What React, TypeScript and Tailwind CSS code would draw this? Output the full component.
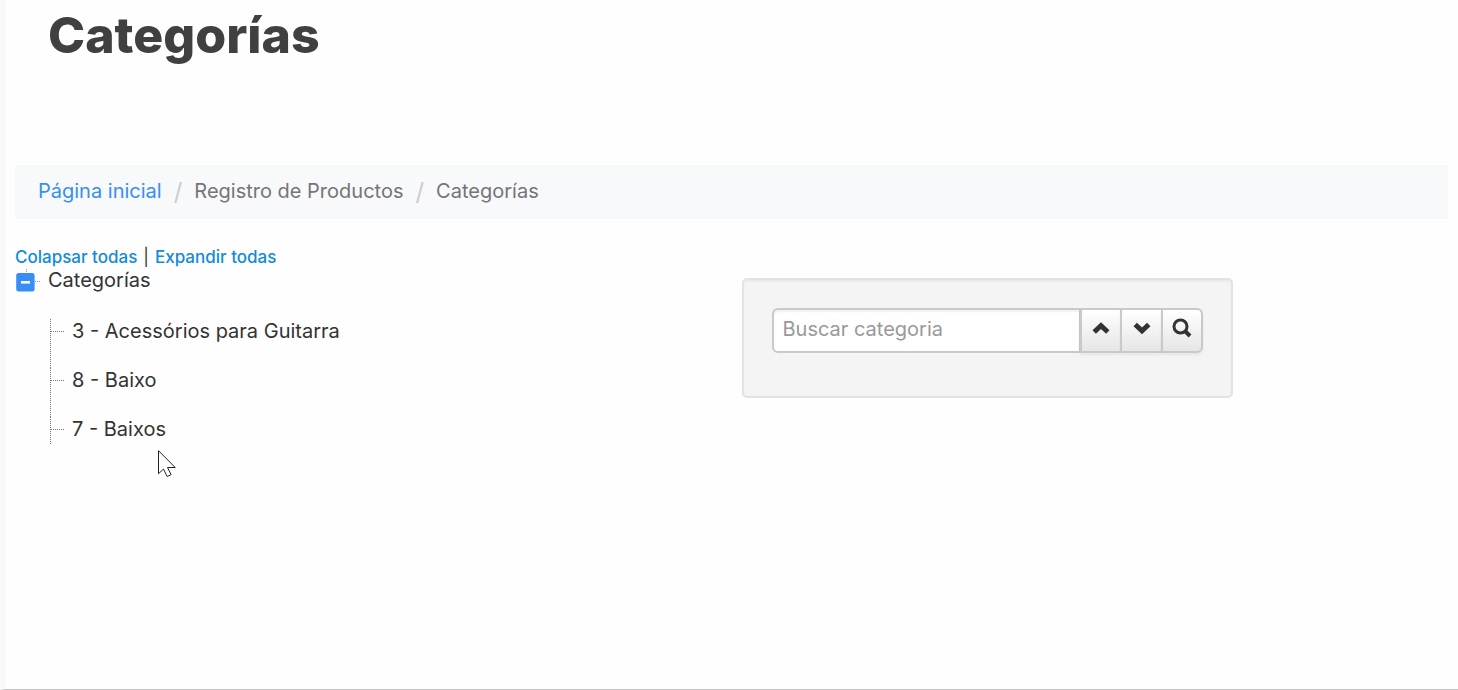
import { useState } from "react";

const categories = ["3 - Acessórios para Guitarra", "8 - Baixo", "7 - Baixos"];

const iconButton =
  "flex h-[45px] shrink-0 items-center justify-center border-y-2 border-l-2 border-[#c9c9c9] bg-linear-to-b from-white to-[#e6e6e6] pb-1.5 text-[#333333] shadow-[0_2px_3px_rgba(0,0,0,0.06)]";

function Separator() {
  return (
    <li aria-hidden="true" className="text-[24px] text-[#cccccc]">/</li>
  );
}

function Breadcrumb() {
  return (
    <nav aria-label="Breadcrumb" className="mt-[94px] bg-[#f8f9fb] px-[23px] pt-[14px] pb-[15px]">
      <ol className="flex items-center gap-3 text-[20px] leading-[25px] text-[#757575]">
        <li>
          <a href="#inicio" className="text-[#378ef7]">Página inicial</a>
        </li>
        <Separator />
        <li>Registro de Productos</li>
        <Separator />
        <li aria-current="page">Categorías</li>
      </ol>
    </nav>
  );
}

function CategoryTree() {
  const [open, setOpen] = useState(true);
  return (
    <div className="text-[#333333]">
      <div className="flex gap-[6px] text-[17px] leading-[24px]">
        <button type="button" onClick={() => setOpen(false)} className="font-medium text-[#138bd8]">Colapsar todas</button>
        <span>|</span>
        <button type="button" onClick={() => setOpen(true)} className="font-medium text-[#138bd8]">Expandir todas</button>
      </div>
      <div className="flex text-[20px] leading-[22px]">
        <button type="button" aria-label="Categorías" aria-expanded={open} onClick={() => setOpen(!open)} className="mr-2 h-6 w-[25px]">
          <svg width="25" height="24" viewBox="0 0 25 24">
            <path d="M11.5 0v4M20 12.5h5" stroke="#999" strokeDasharray="1 1" fill="none" />
            <rect x="1.2" y="4" width="18.4" height="18.5" rx="2.5" fill="#378ef7" />
            <rect x="6" y="12" width="9" height="2.6" fill="#fff" />
          </svg>
        </button>
        <span>Categorías</span>
      </div>
      {open && (
        <ul className="mt-[26px] ml-[35px] text-[20px] leading-[24px]">
          {categories.map((name) => (
            <li key={name} className="flex h-[49px] border-l border-dotted border-[#777777] last:h-[27px]">
              <span className="mt-3 mr-2 w-[13px] border-t border-dotted border-[#777777]" />
              {name}
            </li>
          ))}
        </ul>
      )}
    </div>
  );
}

function SearchPanel() {
  return (
    <form className="mt-[33px] h-[120px] rounded-[5px] border-2 border-[#e3e3e3] bg-[#f4f4f4] p-7 shadow-[inset_0_2px_2px_rgba(0,0,0,0.04)]">
      <div className="flex">
        <input
          type="text"
          aria-label="Buscar categoria"
          placeholder="Buscar categoria"
          className="h-[45px] min-w-0 flex-1 rounded-l-[6px] border-2 border-r border-[#c9c9c9] bg-white px-[9px] pb-1 text-[20px] text-[#555555] shadow-[inset_0_2px_2px_rgba(0,0,0,0.06)] outline-none placeholder:text-[#999999]"
        />
        <button type="button" aria-label="Anterior" className={`${iconButton} w-[40px]`}>
          <svg width="18" height="14" viewBox="0 0 18 14" fill="none" stroke="currentColor" strokeWidth="5">
            <path d="M2.2 11 9 4.7 15.8 11" />
          </svg>
        </button>
        <button type="button" aria-label="Siguiente" className={`${iconButton} w-[41px]`}>
          <svg width="18" height="14" viewBox="0 0 18 14" fill="none" stroke="currentColor" strokeWidth="5">
            <path d="M2.2 3.5 9 9.8 15.8 3.5" />
          </svg>
        </button>
        <button type="button" aria-label="Buscar" className={`${iconButton} w-[42px] rounded-r-[6px] border-r-2`}>
          <svg width="20" height="20" viewBox="0 0 20 20" fill="none" stroke="currentColor">
            <circle cx="8.5" cy="8.5" r="6.5" strokeWidth="3" />
            <path d="m13 13 5 5" strokeWidth="4" />
          </svg>
        </button>
      </div>
    </form>
  );
}

export default function App() {
  return (
    <div className="relative min-h-screen border-b border-l-6 border-b-[#c4c4c4] border-l-[#f9f9f9] bg-[#fefefe] pr-[10px] pl-[9px] font-['Inter',sans-serif]">
      <h1 className="pl-[33px] text-[50px] leading-[71px] font-extrabold text-[#404040]">Categorías</h1>
      <Breadcrumb />
      <main className="mt-[26px] grid grid-cols-[50.7%_34.3%]">
        <CategoryTree />
        <SearchPanel />
      </main>
      <svg className="pointer-events-none absolute top-[450px] left-[152px]" width="19" height="28" viewBox="0 0 19 28" aria-hidden="true">
        <path d="M.5.7v23l5-4.6 3.6 7.4 4-1.8-3.6-7.2h7.7z" fill="#fff" stroke="#222" />
      </svg>
    </div>
  );
}
